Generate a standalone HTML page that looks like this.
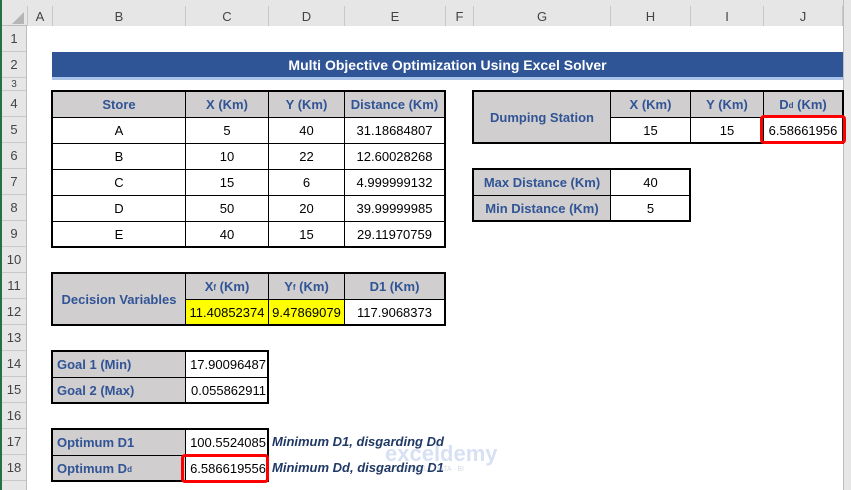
<!DOCTYPE html>
<html><head><meta charset="utf-8"><style>
body{margin:0;width:851px;height:490px;overflow:hidden;background:#fff;position:relative;font-family:"Liberation Sans",Arial,sans-serif}
div{position:absolute;box-sizing:border-box}
.hd{background:#e6e6e6;color:#444;font-size:13px;display:flex;align-items:center;justify-content:center}
.c{border:1px solid #000;display:flex;align-items:center;justify-content:center;font-size:13px;color:#000;background:#fff;white-space:nowrap}
.g{background:#d0cece;color:#305496;font-weight:bold}
.y{background:#ffff00}
.r{justify-content:flex-end;padding-right:2px}
.l{justify-content:flex-start;padding-left:4px}
.f{border:2px solid #000;background:transparent}
.red{border:3px solid #f00;border-radius:4px;background:transparent}
sub{font-size:8px;vertical-align:baseline;position:relative;top:1px}
.it{font-style:italic;font-weight:bold;color:#1f3864;font-size:13px;white-space:nowrap}
</style></head><body>
<div style="left:0;top:0;width:851px;height:26px;background:#e6e6e6;border-bottom:1px solid #bdbdbd"></div>
<div style="left:0;top:26px;width:27px;height:464px;background:#e6e6e6;border-right:1px solid #bdbdbd"></div>
<div style="left:0;top:0;width:2px;height:490px;background:#217346"></div>
<div style="left:843px;top:0;width:8px;height:490px;background:#e6e6e6;border-left:1px solid #bdbdbd"></div>
<div style="left:12px;top:12px;width:0;height:0;border-left:12px solid transparent;border-bottom:12px solid #b5b5b5"></div>
<div class="hd" style="left:27px;top:6px;width:25px;height:20px;border-left:1px solid #c8c8c8">A</div>
<div class="hd" style="left:52px;top:6px;width:133px;height:20px;border-left:1px solid #c8c8c8">B</div>
<div class="hd" style="left:185px;top:6px;width:83px;height:20px;border-left:1px solid #c8c8c8">C</div>
<div class="hd" style="left:268px;top:6px;width:76px;height:20px;border-left:1px solid #c8c8c8">D</div>
<div class="hd" style="left:344px;top:6px;width:101px;height:20px;border-left:1px solid #c8c8c8">E</div>
<div class="hd" style="left:445px;top:6px;width:28px;height:20px;border-left:1px solid #c8c8c8">F</div>
<div class="hd" style="left:473px;top:6px;width:137px;height:20px;border-left:1px solid #c8c8c8">G</div>
<div class="hd" style="left:610px;top:6px;width:80px;height:20px;border-left:1px solid #c8c8c8">H</div>
<div class="hd" style="left:690px;top:6px;width:73px;height:20px;border-left:1px solid #c8c8c8">I</div>
<div class="hd" style="left:763px;top:6px;width:80px;height:20px;border-left:1px solid #c8c8c8;border-right:1px solid #c8c8c8">J</div>
<div class="hd" style="left:2px;top:26px;width:24px;height:26px;border-bottom:1px solid #c8c8c8">1</div>
<div class="hd" style="left:2px;top:52px;width:24px;height:26px;border-bottom:1px solid #c8c8c8">2</div>
<div class="hd" style="left:2px;top:78px;width:24px;height:13px;border-bottom:1px solid #c8c8c8;font-size:10px;overflow:hidden">3</div>
<div class="hd" style="left:2px;top:91px;width:24px;height:26px;border-bottom:1px solid #c8c8c8">4</div>
<div class="hd" style="left:2px;top:117px;width:24px;height:26px;border-bottom:1px solid #c8c8c8">5</div>
<div class="hd" style="left:2px;top:143px;width:24px;height:26px;border-bottom:1px solid #c8c8c8">6</div>
<div class="hd" style="left:2px;top:169px;width:24px;height:26px;border-bottom:1px solid #c8c8c8">7</div>
<div class="hd" style="left:2px;top:195px;width:24px;height:26px;border-bottom:1px solid #c8c8c8">8</div>
<div class="hd" style="left:2px;top:221px;width:24px;height:26px;border-bottom:1px solid #c8c8c8">9</div>
<div class="hd" style="left:2px;top:247px;width:24px;height:26px;border-bottom:1px solid #c8c8c8">10</div>
<div class="hd" style="left:2px;top:273px;width:24px;height:26px;border-bottom:1px solid #c8c8c8">11</div>
<div class="hd" style="left:2px;top:299px;width:24px;height:26px;border-bottom:1px solid #c8c8c8">12</div>
<div class="hd" style="left:2px;top:325px;width:24px;height:26px;border-bottom:1px solid #c8c8c8">13</div>
<div class="hd" style="left:2px;top:351px;width:24px;height:26px;border-bottom:1px solid #c8c8c8">14</div>
<div class="hd" style="left:2px;top:377px;width:24px;height:26px;border-bottom:1px solid #c8c8c8">15</div>
<div class="hd" style="left:2px;top:403px;width:24px;height:26px;border-bottom:1px solid #c8c8c8">16</div>
<div class="hd" style="left:2px;top:429px;width:24px;height:26px;border-bottom:1px solid #c8c8c8">17</div>
<div class="hd" style="left:2px;top:455px;width:24px;height:26px;border-bottom:1px solid #c8c8c8">18</div>

<div style="left:52px;top:52px;width:791px;height:26px;background:#2f5597;color:#fff;font-weight:bold;font-size:14px;display:flex;align-items:center;justify-content:center">Multi Objective Optimization Using Excel Solver</div>
<div style="left:52px;top:77px;width:791px;height:3px;background:#a9c4e8"></div>

<div class="c g" style="left:52px;top:91px;width:134px;height:27px">Store</div>
<div class="c g" style="left:185px;top:91px;width:84px;height:27px">X (Km)</div>
<div class="c g" style="left:268px;top:91px;width:77px;height:27px">Y (Km)</div>
<div class="c g" style="left:344px;top:91px;width:101px;height:27px">Distance (Km)</div>
<div class="c" style="left:52px;top:117px;width:134px;height:27px">A</div>
<div class="c" style="left:185px;top:117px;width:84px;height:27px">5</div>
<div class="c" style="left:268px;top:117px;width:77px;height:27px">40</div>
<div class="c" style="left:344px;top:117px;width:101px;height:27px">31.18684807</div>
<div class="c" style="left:52px;top:143px;width:134px;height:27px">B</div>
<div class="c" style="left:185px;top:143px;width:84px;height:27px">10</div>
<div class="c" style="left:268px;top:143px;width:77px;height:27px">22</div>
<div class="c" style="left:344px;top:143px;width:101px;height:27px">12.60028268</div>
<div class="c" style="left:52px;top:169px;width:134px;height:27px">C</div>
<div class="c" style="left:185px;top:169px;width:84px;height:27px">15</div>
<div class="c" style="left:268px;top:169px;width:77px;height:27px">6</div>
<div class="c" style="left:344px;top:169px;width:101px;height:27px">4.999999132</div>
<div class="c" style="left:52px;top:195px;width:134px;height:27px">D</div>
<div class="c" style="left:185px;top:195px;width:84px;height:27px">50</div>
<div class="c" style="left:268px;top:195px;width:77px;height:27px">20</div>
<div class="c" style="left:344px;top:195px;width:101px;height:27px">39.99999985</div>
<div class="c" style="left:52px;top:221px;width:134px;height:27px">E</div>
<div class="c" style="left:185px;top:221px;width:84px;height:27px">40</div>
<div class="c" style="left:268px;top:221px;width:77px;height:27px">15</div>
<div class="c" style="left:344px;top:221px;width:101px;height:27px">29.11970759</div>
<div class="f" style="left:51px;top:90px;width:395px;height:158px"></div>

<div class="c g" style="left:473px;top:91px;width:138px;height:53px">Dumping Station</div>
<div class="c g" style="left:610px;top:91px;width:81px;height:27px">X (Km)</div>
<div class="c g" style="left:690px;top:91px;width:74px;height:27px">Y (Km)</div>
<div class="c g" style="left:763px;top:91px;width:80px;height:27px">D<sub>d</sub>&nbsp;(Km)</div>
<div class="c" style="left:610px;top:117px;width:81px;height:27px">15</div>
<div class="c" style="left:690px;top:117px;width:74px;height:27px">15</div>
<div class="c" style="left:763px;top:117px;width:80px;height:27px">6.58661956</div>
<div class="f" style="left:472px;top:90px;width:372px;height:54px"></div>
<div class="red" style="left:760px;top:115px;width:86px;height:29px"></div>

<div class="c g" style="left:473px;top:169px;width:138px;height:27px">Max Distance (Km)</div>
<div class="c" style="left:610px;top:169px;width:81px;height:27px">40</div>
<div class="c g" style="left:473px;top:195px;width:138px;height:27px">Min Distance (Km)</div>
<div class="c" style="left:610px;top:195px;width:81px;height:27px">5</div>
<div class="f" style="left:472px;top:168px;width:219px;height:54px"></div>

<div class="c g" style="left:52px;top:273px;width:134px;height:53px">Decision Variables</div>
<div class="c g" style="left:185px;top:273px;width:84px;height:27px">X<sub>f</sub>&nbsp;(Km)</div>
<div class="c g" style="left:268px;top:273px;width:77px;height:27px">Y<sub>f</sub>&nbsp;(Km)</div>
<div class="c g" style="left:344px;top:273px;width:101px;height:27px">D1 (Km)</div>
<div class="c y" style="left:185px;top:299px;width:84px;height:27px">11.40852374</div>
<div class="c y" style="left:268px;top:299px;width:77px;height:27px">9.47869079</div>
<div class="c" style="left:344px;top:299px;width:101px;height:27px">117.9068373</div>
<div class="f" style="left:51px;top:272px;width:395px;height:54px"></div>

<div class="c g l" style="left:52px;top:351px;width:134px;height:27px">Goal 1 (Min)</div>
<div class="c r" style="left:185px;top:351px;width:84px;height:27px">17.90096487</div>
<div class="c g l" style="left:52px;top:377px;width:134px;height:27px">Goal 2 (Max)</div>
<div class="c r" style="left:185px;top:377px;width:84px;height:27px">0.055862911</div>
<div class="f" style="left:51px;top:350px;width:218px;height:54px"></div>

<div class="c g l" style="left:52px;top:429px;width:134px;height:27px">Optimum D1</div>
<div class="c r" style="left:185px;top:429px;width:84px;height:27px">100.5524085</div>
<div class="c g l" style="left:52px;top:455px;width:134px;height:27px">Optimum D<sub>d</sub></div>
<div class="c r" style="left:185px;top:455px;width:84px;height:27px">6.586619556</div>
<div class="f" style="left:51px;top:428px;width:218px;height:54px"></div>
<div class="red" style="left:181px;top:454px;width:88px;height:29px"></div>
<div class="it" style="left:272px;top:434px">Minimum D1, disgarding Dd</div>
<div class="it" style="left:272px;top:460px">Minimum Dd, disgarding D1</div>
<div style="left:385px;top:441px;font-size:22px;font-weight:bold;color:rgba(140,170,220,0.35);white-space:nowrap">exceldemy</div>
<div style="left:405px;top:466px;font-size:7px;color:rgba(140,160,190,0.4);white-space:nowrap">EXCEL · DATA · BI</div>
</body></html>
